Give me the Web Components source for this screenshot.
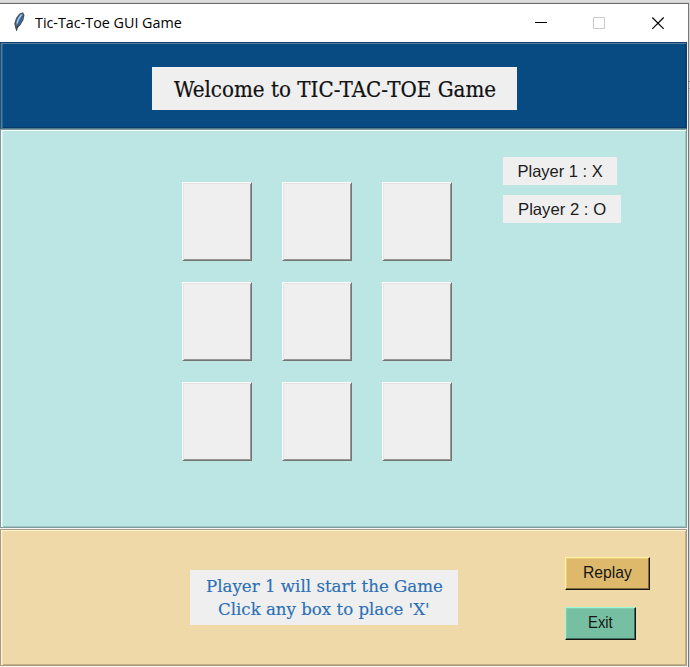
<!DOCTYPE html>
<html lang="en"><head><meta charset="utf-8"><title>Tic-Tac-Toe GUI Game</title>
<style>html,body{margin:0;width:690px;height:667px;overflow:hidden;background:linear-gradient(#d8d8d8 81px,#777 81px 82px,#d8d8d8 82px 88px,#999 88px 89px,#d8d8d8 89px)}</style></head>
<body><game-window></game-window>
<script>
class Base extends HTMLElement{
  constructor(){super();this.attachShadow({mode:'open'}).innerHTML=this.constructor.html;}
}
// Text run stretched horizontally to the advance width given in "width".
customElements.define('fit-text',class extends Base{
  static html=`<style>:host{display:block;white-space:nowrap;width:var(--w)}span{display:inline-block;transform-origin:0 50%}</style><span><slot></slot></span>`;
  connectedCallback(){
    const w=+this.getAttribute('width');
    this.style.setProperty('--w',w+'px');
    const s=this.shadowRoot.querySelector('span');
    s.style.transform=`scaleX(${w/s.offsetWidth})`;
  }
});
customElements.define('title-bar',class extends Base{
  static html=`<style>:host{display:flex;height:38px;background:#fff;align-items:center;box-sizing:border-box;padding-left:11px;font:15px/36px "Open Sans","Noto Sans",sans-serif;color:#000}
  .t{margin-left:8px;margin-top:-3px;flex:none}svg{display:block}.f{margin-top:-2px}.c{display:flex;padding-right:22px;margin-left:auto}</style>
  <svg class="f" width="16" height="22" viewBox="0 0 16 22"><path d="M12 1.2 8.5 2.5 5 7 3.3 12.5 4.2 17 5.5 20.3 6.5 17 9.5 14 12.5 9 13.5 4Z" fill="#4a545e"/><path d="M11.8 2.5 8.2 5 5.8 9.5 5 13.5 6.2 15.5 9.5 11.5 12 7Z" fill="#4d83be"/><path d="M10.5 3.5 7.3 8 6 12.5" stroke="#a9cdef" fill="none" stroke-width="1.3"/><path d="M11.6 5 7 14 5.6 20" stroke="#1c2733" fill="none" stroke-width=".6"/></svg>
  <fit-text class="t" width="147">Tic-Tac-Toe GUI Game</fit-text>
  <div class="c">
  <svg width="131" height="13" viewBox="0 0 131 13"><path d="M0 5.5H12" stroke="#000"/><path d="M58.5 .5h11v11h-11z" fill="none" stroke="#c9c9c9"/><path d="M117.3 .5l11.4 11.4M128.7 .5l-11.4 11.4" stroke="#000" stroke-width="1.15"/></svg></div>`;
});
customElements.define('relief-panel',class extends Base{
  static html=`<style>:host{display:block;box-sizing:border-box;border:1px solid var(--edge);border-left-color:var(--left,var(--edge));background:var(--bg);box-shadow:inset 1px 1px var(--light),inset 2px 0 var(--soft),inset -1px -1px var(--dark)}</style><slot></slot>`;
});
customElements.define('text-label',class extends Base{
  static html=`<style>:host{display:flex;flex-direction:column;align-items:center;justify-content:center;background:#efefef;box-sizing:border-box}</style><slot></slot>`;
});
customElements.define('board-cell',class extends Base{
  static html=`<style>:host{display:block;box-sizing:border-box;width:70px;height:79px;background:#efefef;border:1px solid;border-color:#fff #757575 #757575 #fff;box-shadow:inset 1px 1px #e4e4e4,inset -1px -1px #979797}</style>`;
});
customElements.define('push-button',class extends Base{
  static html=`<style>:host{display:flex;align-items:center;justify-content:center;box-sizing:border-box;background:var(--bg);border:1px solid;border-color:var(--light) #151515 #151515 var(--light);box-shadow:inset -1px -1px var(--dark),inset 1px 1px var(--soft);font:16px/20px "Liberation Sans",sans-serif;color:#151515}</style><slot></slot>`;
});
customElements.define('game-board',class extends Base{
  static html=`<style>:host{display:grid;grid-template-columns:repeat(3,70px);gap:21px 30px;align-content:start}</style>${'<board-cell></board-cell>'.repeat(9)}`;
});
customElements.define('game-window',class extends Base{
  static html=`<style>
  :host{display:block;width:689px;height:667px;box-sizing:border-box;padding-top:3px;background:linear-gradient(#e2e2e2,#d0d0d0 3px)}
  .win{border-top:1px solid #696969;border-right:1px solid #777;height:663px;background:#f4f4f4}
  relief-panel{width:687px}
  .head{height:87px;--edge:#164067;--left:#24506f;--bg:#084b82;--light:#4f7da3;--soft:#2b638f;--dark:#073a68;padding:24px 0 0 151px;border-bottom-color:#53778d}
  .head text-label{width:365px;height:43px;font:22px/30px "DejaVu Serif Condensed","DejaVu Serif",serif;color:#111;padding:2px 0 0 1px;-webkit-text-stroke:.2px #111}
  .play{height:399px;--edge:#7c9d9c;--bg:#bce6e3;--light:#f5ffff;--soft:#d9eeec;--dark:#9fc4c1;display:flex;padding:52px 0 0 181px}
  .side{margin:-25px 0 0 51px;display:flex;flex-direction:column;gap:10px}
  .side text-label{height:28px;font:16.5px/24px "Liberation Sans",sans-serif;color:#1b1b1b}
  .foot{height:137px;margin-top:1px;--edge:#a99b7e;--bg:#f0d9a8;--light:#fff3d5;--soft:#f0e1bf;--dark:#c2ae83;display:flex;padding:40px 0 0 189px}
  .foot text-label{width:268px;height:55px;font:17.5px/23.5px "DejaVu Serif Condensed","DejaVu Serif",serif;color:#2c6fb5;padding-top:1px;-webkit-text-stroke:.15px #2c6fb5}
  .btns{margin:-13px 0 0 107px;display:flex;flex-direction:column;gap:17px}
  .r{width:85px;height:33px;--bg:#deb96c;--light:#fff49c;--soft:#ebcb7b;--dark:#806a3e}
  .e{width:71px;height:33px;--bg:#77bfa2;--light:#9cf9d3;--soft:#82cdb0;--dark:#3f6d5b}
  push-button{padding-bottom:1px}
  </style>
  <div class="win"><title-bar></title-bar>
  <relief-panel class="head"><text-label><fit-text width="322">Welcome to TIC-TAC-TOE Game</fit-text></text-label></relief-panel>
  <relief-panel class="play"><game-board></game-board>
  <div class="side"><text-label style="width:114px"><fit-text width="85">Player 1 : X</fit-text></text-label><text-label style="width:118px"><fit-text width="88">Player 2 : O</fit-text></text-label></div></relief-panel>
  <relief-panel class="foot"><text-label><fit-text width="237">Player 1 will start the Game</fit-text><fit-text width="212">Click any box to place 'X'</fit-text></text-label>
  <div class="btns"><push-button class="r"><fit-text width="49">Replay</fit-text></push-button><push-button class="e"><fit-text width="25">Exit</fit-text></push-button></div></relief-panel>
  </div>`;
});
</script></body></html>
